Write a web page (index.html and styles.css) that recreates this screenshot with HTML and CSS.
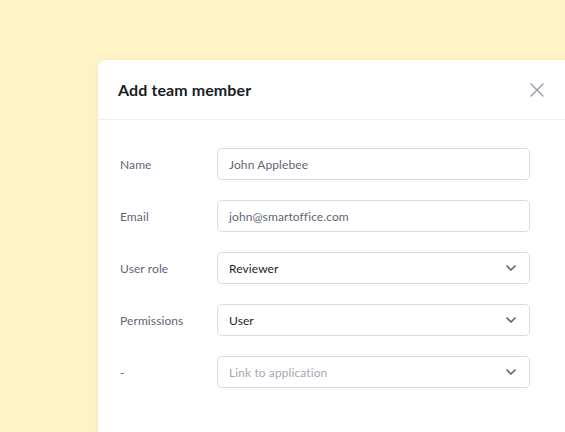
FILE: index.html
```html
<!DOCTYPE html>
<html>
<head>
<meta charset="utf-8">
<link rel="stylesheet" href="styles.css">
</head>
<body>
<div class="modal">
  <div class="modal-header">
    <h2 class="title">Add team member</h2>
    <button class="close" aria-label="Close">
      <svg width="14" height="14" viewBox="0 0 14 14"><path d="M1 1L13 13M13 1L1 13" stroke="#9aa0aa" stroke-width="1.5" stroke-linecap="round"/></svg>
    </button>
  </div>
  <div class="modal-body">
    <div class="row">
      <label class="label">Name</label>
      <div class="field"><span class="value muted">John Applebee</span></div>
    </div>
    <div class="row">
      <label class="label">Email</label>
      <div class="field"><span class="value muted">john@smartoffice.com</span></div>
    </div>
    <div class="row">
      <label class="label">User role</label>
      <div class="field select"><span class="value">Reviewer</span><svg class="chev" width="10" height="6" viewBox="0 0 10 6"><path d="M1 1L5 5L9 1" fill="none" stroke="#5f6673" stroke-width="1.7" stroke-linecap="round" stroke-linejoin="round"/></svg></div>
    </div>
    <div class="row">
      <label class="label">Permissions</label>
      <div class="field select"><span class="value">User</span><svg class="chev" width="10" height="6" viewBox="0 0 10 6"><path d="M1 1L5 5L9 1" fill="none" stroke="#5f6673" stroke-width="1.7" stroke-linecap="round" stroke-linejoin="round"/></svg></div>
    </div>
    <div class="row">
      <label class="label">-</label>
      <div class="field select"><span class="value placeholder">Link to application</span><svg class="chev" width="10" height="6" viewBox="0 0 10 6"><path d="M1 1L5 5L9 1" fill="none" stroke="#5f6673" stroke-width="1.7" stroke-linecap="round" stroke-linejoin="round"/></svg></div>
    </div>
  </div>
</div>
</body>
</html>
```
FILE: styles.css
```css
html, body {
  margin: 0;
  height: 100%;
}
body {
  background: #fef3c7;
  font-family: Lato, "Noto Sans", sans-serif;
  overflow: hidden;
  padding: 60px 0 0 98px;
  box-sizing: border-box;
}
.modal {
  width: 467px;
  height: 372px;
  background: #fff;
  border-radius: 8px 0 0 0;
  box-shadow: 0 1px 4px rgba(120, 100, 40, 0.12);
}
.modal-header {
  height: 60px;
  display: flex;
  align-items: center;
  justify-content: space-between;
  padding: 0 21px 0 20px;
  border-bottom: 1px solid #eeeff1;
  box-sizing: border-box;
}
.title {
  margin: 0;
  font-size: 16px;
  font-weight: 700;
  color: #1a1d24;
  letter-spacing: 0.1px;
}
.close {
  border: 0;
  background: none;
  padding: 0;
  width: 14px;
  height: 14px;
  display: flex;
}
.modal-body {
  padding: 28px 0 0 22px;
  display: flex;
  flex-direction: column;
  gap: 20px;
}
.row {
  display: flex;
  align-items: center;
}
.label {
  width: 97px;
  font-size: 12px;
  color: #5e6573;
  letter-spacing: 0.1px;
}
.field {
  width: 313px;
  height: 32px;
  box-sizing: border-box;
  border: 1px solid #d9dbe0;
  border-radius: 5px;
  display: flex;
  align-items: center;
  justify-content: space-between;
  padding: 0 13px 0 11px;
}
.value {
  font-size: 12px;
  color: #1f2329;
  letter-spacing: 0.1px;
}
.value.muted {
  color: #5e6573;
}
.value.placeholder {
  color: #a3a8b2;
}
.chev {
  display: block;
}
```
